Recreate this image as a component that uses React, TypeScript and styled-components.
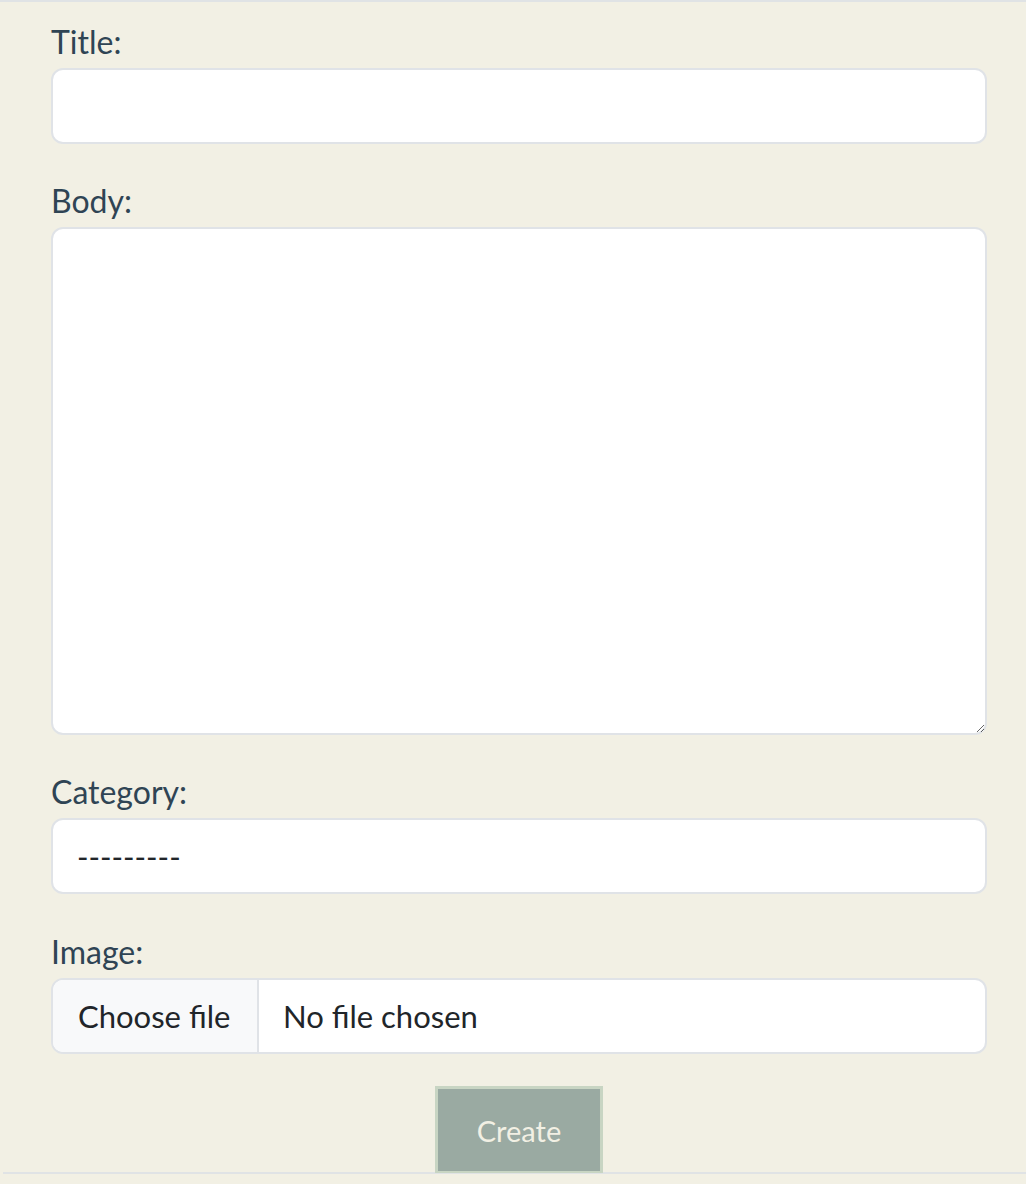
import styled, { createGlobalStyle } from "styled-components";

const GlobalStyle = createGlobalStyle`
  html, body {
    margin: 0;
    padding: 0;
    background: #f2f0e4;
  }
  body {
    font-family: Lato, "Noto Sans", sans-serif;
  }
  * { box-sizing: border-box; }
`;

// ─── Styled Components ────────────────────────────────────────────────────────

const Page = styled.div`
  min-height: 1184px;
  background: #f2f0e4;
  border-top: 2px solid #e0e3e5;
`;

const Form = styled.form`
  display: flex;
  flex-direction: column;
  margin-left: 3px;
  padding: 15px 39px 0 48px;
  border-bottom: 2px solid #e0e3e5;
`;

const Field = styled.div`
  display: flex;
  flex-direction: column;
  margin-bottom: 32px;

  &:nth-of-type(3) { margin-bottom: 33px; }
  &:last-of-type { margin-bottom: 31px; }
`;

const Label = styled.label`
  font-size: 32px;
  line-height: 45px;
  color: #2f4454;
  padding-top: 2px;
  margin-bottom: 4px;
`;

const controlBase = `
  width: 100%;
  font-family: Lato, "Noto Sans", sans-serif;
  font-size: 31px;
  color: #212529;
  background: #fff;
  border: 2px solid #e0e3e7;
  border-radius: 12px;
  outline: none;
`;

const TextInput = styled.input`
  ${controlBase}
  height: 76px;
  padding: 0 24px;
`;

const TextArea = styled.textarea`
  ${controlBase}
  height: 508px;
  padding: 12px 24px;
  resize: vertical;
  display: block;
`;

const Select = styled.select`
  ${controlBase}
  height: 76px;
  padding: 0 24px;
  appearance: none;
  -webkit-appearance: none;
`;

const FileBox = styled.div`
  ${controlBase}
  height: 76px;
  display: flex;
  align-items: stretch;
  overflow: hidden;
`;

const FileButton = styled.span`
  display: flex;
  align-items: center;
  padding: 0 0 0 25px;
  background: #f8f9fa;
  border-right: 2px solid #e0e3e7;
  width: 206px;
  flex-shrink: 0;
`;

const FileName = styled.span`
  display: flex;
  align-items: center;
  padding: 0 24px;
`;

const Actions = styled.div`
  display: flex;
  justify-content: center;
`;

const SubmitButton = styled.button`
  width: 168px;
  height: 87px;
  background: #9aaaa2;
  border: 3px solid #c8d5c3;
  border-bottom-width: 2px;
  color: #f2f0e4;
  font-family: Lato, "Noto Sans", sans-serif;
  font-size: 29px;
  cursor: pointer;
  margin-bottom: -1px;
`;

// ─── Component ────────────────────────────────────────────────────────────────

export default function App() {
  return (
    <Page>
      <GlobalStyle />
      <Form onSubmit={(e) => e.preventDefault()}>
        <Field>
          <Label htmlFor="title">Title:</Label>
          <TextInput id="title" type="text" />
        </Field>

        <Field>
          <Label htmlFor="body">Body:</Label>
          <TextArea id="body" />
        </Field>

        <Field>
          <Label htmlFor="category">Category:</Label>
          <Select id="category" defaultValue="">
            <option value="">---------</option>
          </Select>
        </Field>

        <Field>
          <Label>Image:</Label>
          <FileBox>
            <FileButton>Choose file</FileButton>
            <FileName>No file chosen</FileName>
          </FileBox>
        </Field>

        <Actions>
          <SubmitButton type="submit">Create</SubmitButton>
        </Actions>
      </Form>
    </Page>
  );
}
